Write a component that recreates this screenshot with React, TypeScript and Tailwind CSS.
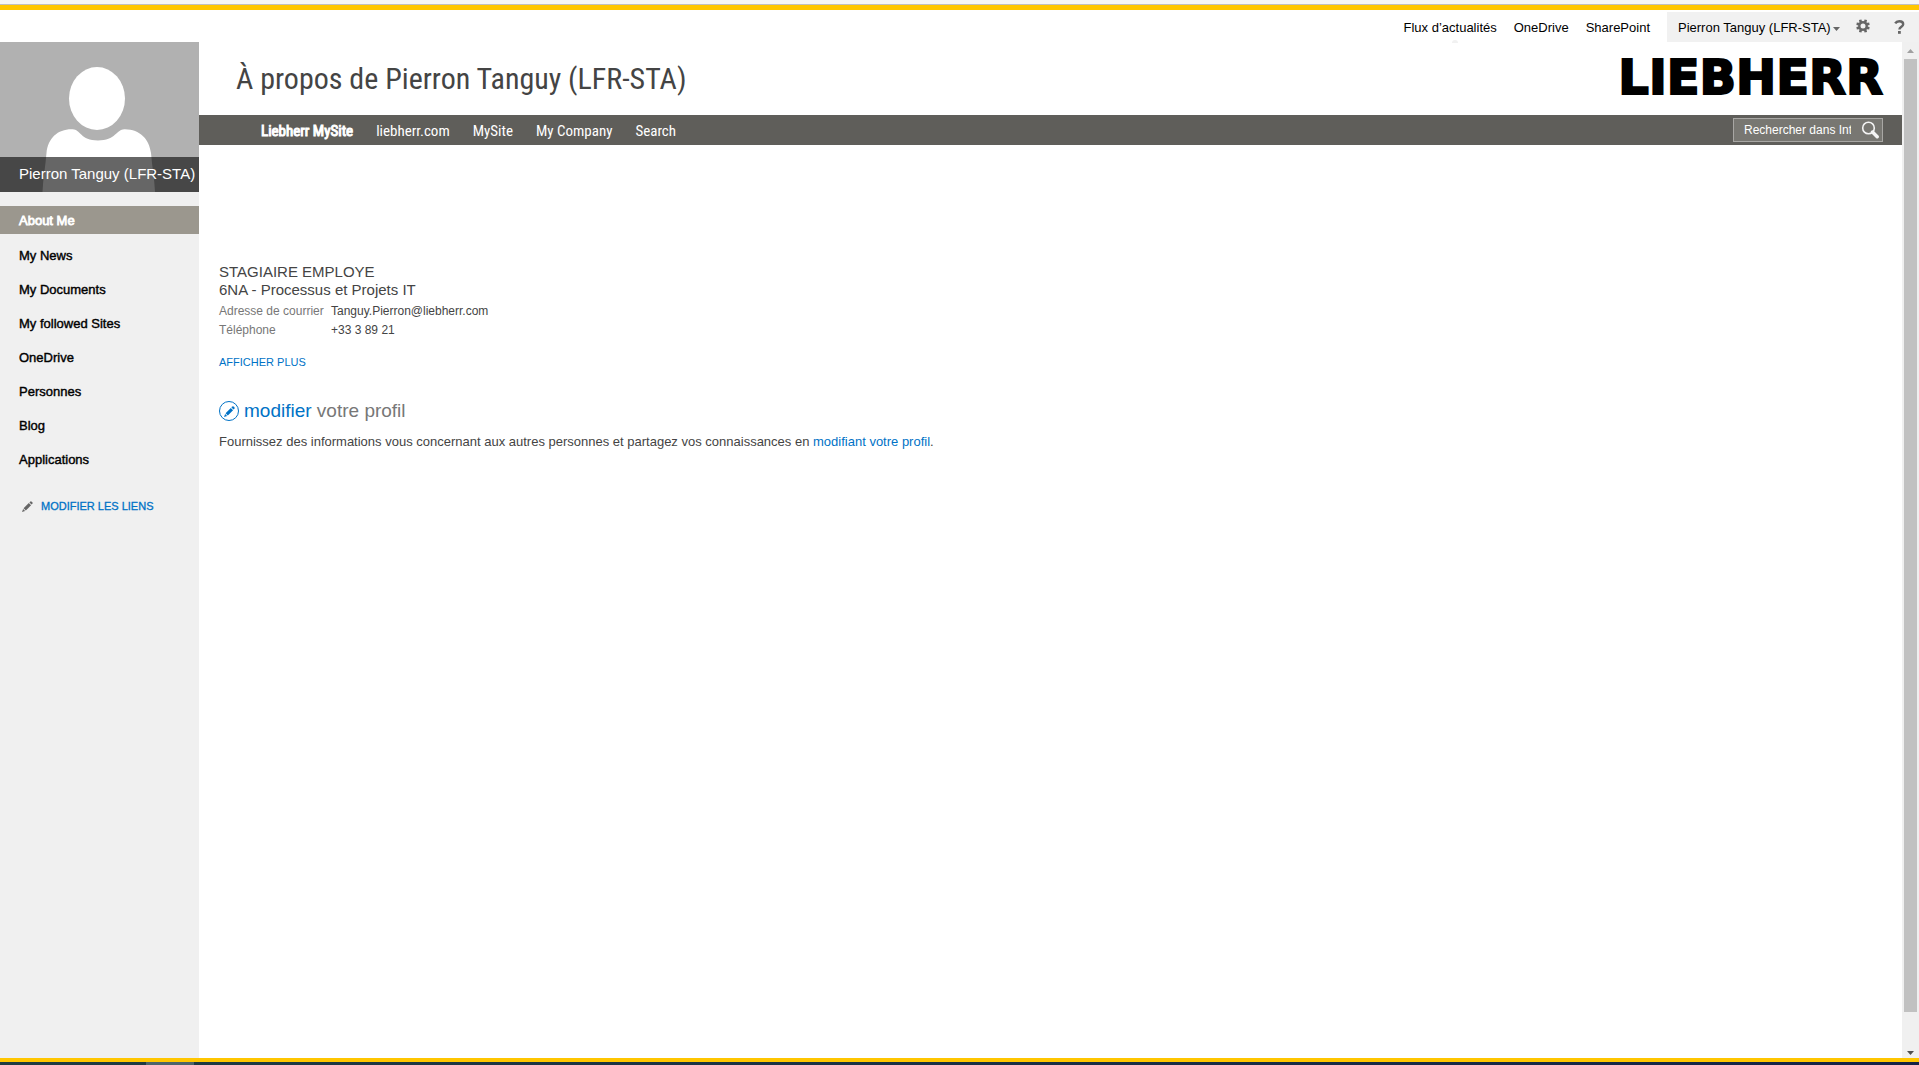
import React from "react";

const suiteLinks = ["Flux d’actualités", "OneDrive", "SharePoint"];
const topNav = ["Liebherr MySite", "liebherr.com", "MySite", "My Company", "Search"];
const sideNav = [
  "About Me",
  "My News",
  "My Documents",
  "My followed Sites",
  "OneDrive",
  "Personnes",
  "Blog",
  "Applications",
];

function Pencil({ className }: { className: string }) {
  return (
    <svg viewBox="0 0 12 12" className={className} fill="currentColor" aria-hidden="true">
      <path d="M0 12 L1.2 8.6 L3.4 10.8 Z" />
      <path d="M1.7 8 L7.4 2.1 L9.9 4.600 L4.2 10.400 Z" />
      <path d="M8.1 1.6 L9.2 0.5 Q9.7 0 10.3 0.5 L11.5 1.7 Q12 2.3 11.5 2.8 L10.4 3.9 Z" />
    </svg>
  );
}

function Avatar() {
  return (
    <svg viewBox="0 0 199 150" className="block h-[150px] w-full bg-[#b1b1b1]" role="img" aria-label="Photo de profil">
      <g fill="#fff">
        <ellipse cx="97" cy="56.500" rx="28" ry="31.500" />
        <path d="M42.500 150 C43 137 45.500 124 46.500 111 C48 96 58 87 72 87.300 C80 86.500 80 98.500 98 98.500 C116 98.500 117 86.500 125 87.300 C140 87.500 149 97 151 111 C152 124 154.500 137 155 150 Z" />
      </g>
    </svg>
  );
}

function Gear() {
  return (
    <svg viewBox="0 0 14 14" className="size-[14px]" aria-hidden="true">
      <g stroke="#666" strokeWidth="2.600">
        <path d="M4.200 0.800 L5 4 M9.800 0.800 L9 4 M4.200 13.200 L5 10 M9.800 13.200 L9 10 M0.600 4.800 L4 5.400 M0.600 9.200 L4 8.600 M13.400 4.800 L10 5.400 M13.400 9.200 L10 8.600" />
        <circle cx="7" cy="7" r="3.700" fill="#f1f1f1" strokeWidth="2.400" />
      </g>
    </svg>
  );
}

export default function App() {
  return (
    <div className="flex h-screen flex-col overflow-hidden bg-white font-['Liberation_Sans',Arial,sans-serif] text-[13px] text-black">
      <div className="h-[5px] shrink-0 border-b border-[#c0c0c0] bg-[#f6f6f6]" />
      <div className="h-[5px] shrink-0 bg-[#ffc600]" />

      <header className="flex h-8 shrink-0 items-end justify-end">
        <nav className="relative flex h-[30px] items-center gap-[17px] pt-0.5 pr-[17px]">
          {suiteLinks.map((label) => (
            <a key={label} href="#">
              {label}
            </a>
          ))}
          <span className="absolute -bottom-px left-[48px] h-[3px] w-1.5 rounded-t-full bg-[#f1f1f1]" />
        </nav>
        <div className="flex h-[30px] w-[252px] items-center bg-[#f1f1f1] pl-[11px]">
          <button type="button" className="flex items-center gap-0.5 pt-0.5 whitespace-nowrap">
            Pierron Tanguy (LFR-STA)
            <svg viewBox="0 0 7 4" className="mt-0.5 h-1 w-[7px]" aria-hidden="true">
              <path d="M0 0 H7 L3.500 4 Z" fill="#666" />
            </svg>
          </button>
          <button type="button" aria-label="Paramètres" className="mb-0.5 ml-auto">
            <Gear />
          </button>
          <button type="button" aria-label="Aide" className="mr-[14px] ml-6">
            <svg viewBox="0 0 11 14" className="h-[14px] w-[11px]" fill="none" aria-hidden="true">
              <path d="M1.200 3.400 C2.200 1.700 3.600 1.200 5.200 1.200 C7.600 1.200 9.200 2.300 9.200 4.200 C9.200 6.800 5.400 6.600 5.400 9.600" stroke="#666" strokeWidth="2.400" />
              <rect x="4" y="11" width="2.800" height="2.800" fill="#666" />
            </svg>
          </button>
        </div>
      </header>

      <div className="flex min-h-0 flex-1">
        <aside className="w-[199px] shrink-0 bg-[#f0f0f0]">
          <div className="relative">
            <Avatar />
            <div className="absolute inset-x-0 bottom-0 flex h-[35px] items-center bg-black/60 pl-[19px] text-[15px] whitespace-nowrap text-white">
              Pierron Tanguy (LFR-STA)
            </div>
          </div>
          <nav className="mt-[14px] flex flex-col gap-1.5 [-webkit-text-stroke:0.4px]">
            {sideNav.map((label, i) => (
              <a
                key={label}
                href="#"
                className={
                  i === 0
                    ? "flex h-7 items-center bg-[#9b978e] pt-0.5 pl-[19px] text-white [-webkit-text-stroke:0.8px]"
                    : "flex h-7 items-center pt-1 pl-[19px]"
                }
              >
                {label}
              </a>
            ))}
          </nav>
          <button type="button" className="mt-[26px] flex items-center gap-2 pl-[22px] text-[11px] text-[#0072c6] [-webkit-text-stroke:0.3px]">
            <Pencil className="size-[11px] text-[#666]" />
            MODIFIER LES LIENS
          </button>
        </aside>

        <div className="flex min-w-0 flex-1 flex-col">
          <div className="flex h-[73px] shrink-0 items-center justify-between pr-[19px] pl-[37px]">
            <h1 className="font-['Roboto_Condensed','Arial_Narrow',sans-serif] text-[30px] whitespace-nowrap text-[#444]">
              À propos de Pierron Tanguy (LFR-STA)
            </h1>
            <a
              href="#"
              className="pb-1 font-['DejaVu_Sans',sans-serif] text-[48px] leading-none font-bold [-webkit-text-stroke:2px_black]"
            >
              LIEBHERR
            </a>
          </div>
          <div className="flex h-[30px] shrink-0 items-center justify-between bg-[#5f5e5a] pr-[19px] pl-[62px]">
            <nav className="flex gap-[23px] pt-0.5 font-['Roboto_Condensed','Arial_Narrow',sans-serif] text-[15px] text-white">
              {topNav.map((label, i) => (
                <a key={label} href="#" className={i === 0 ? "[-webkit-text-stroke:1px]" : ""}>
                  {label}
                </a>
              ))}
            </nav>
            <form className="flex h-6 w-[150px] items-center border border-[#a8a7a4] bg-[#787772] pr-[3px] pl-2.5">
              <input
                type="text"
                aria-label="Rechercher"
                defaultValue="Rechercher dans Intranet"
                className="w-[107px] bg-transparent text-[12px] text-white outline-none"
              />
              <button type="button" aria-label="Lancer la recherche" className="ml-auto">
                <svg viewBox="0 0 18 18" className="size-[18px]" fill="none" stroke="#f4f4f4" aria-hidden="true">
                  <circle cx="7.500" cy="7" r="5.800" strokeWidth="1.600" />
                  <path d="M11.500 11 L16.200 15.800" strokeWidth="3.400" strokeLinecap="round" />
                </svg>
              </button>
            </form>
          </div>

          <main className="px-5 pt-[118px] text-[#444]">
            <div className="text-[15px] leading-[18px]">
              <p>STAGIAIRE EMPLOYE</p>
              <p>6NA - Processus et Projets IT</p>
            </div>
            <table className="mt-[3px] text-[12px] leading-[19px]">
              <tbody>
                <tr>
                  <th scope="row" className="w-28 p-0 text-left font-normal text-[#777]">Adresse de courrier</th>
                  <td className="p-0">Tanguy.Pierron@liebherr.com</td>
                </tr>
                <tr>
                  <th scope="row" className="p-0 text-left font-normal text-[#777]">Téléphone</th>
                  <td className="p-0">+33 3 89 21</td>
                </tr>
              </tbody>
            </table>
            <a href="#" className="mt-[14px] block text-[11px] leading-4 text-[#0072c6]">
              AFFICHER PLUS
            </a>
            <h2 className="mt-[29px] flex items-center gap-[5px] text-[19px] leading-6 text-[#777]">
              <span className="flex size-5 items-center justify-center rounded-full border border-[#0072c6] text-[#0072c6]">
                <Pencil className="size-[11px]" />
              </span>
              <span>
                <a href="#" className="text-[#0072c6]">modifier</a> votre profil
              </span>
            </h2>
            <p className="mt-[9px] leading-5">
              Fournissez des informations vous concernant aux autres personnes et partagez vos connaissances en{" "}
              <a href="#" className="text-[#0072c6]">modifiant votre profil</a>.
            </p>
          </main>
        </div>

        <div className="flex w-[17px] shrink-0 flex-col items-center bg-[#f0f0f0]" aria-hidden="true">
          <div className="flex h-[17px] shrink-0 items-center">
            <svg viewBox="0 0 7 4" className="h-1 w-[7px]">
              <path d="M0 4 L3.500 0 L7 4 Z" fill="#a0a0a0" />
            </svg>
          </div>
          <div className="w-[13px] flex-1 bg-[#c1c1c1]" />
          <div className="flex h-[46px] shrink-0 items-end pb-[3px]">
            <svg viewBox="0 0 7 4" className="h-1 w-[7px]">
              <path d="M0 0 H7 L3.500 4 Z" fill="#505050" />
            </svg>
          </div>
        </div>
      </div>

      <div className="h-1 shrink-0 bg-[#ffc600]" />
      <div className="h-[3px] shrink-0 bg-linear-to-r from-[#1f3c42] to-[#152347] pl-[146px]">
        <div className="h-full w-12 bg-[#4d646a]" />
      </div>
    </div>
  );
}
